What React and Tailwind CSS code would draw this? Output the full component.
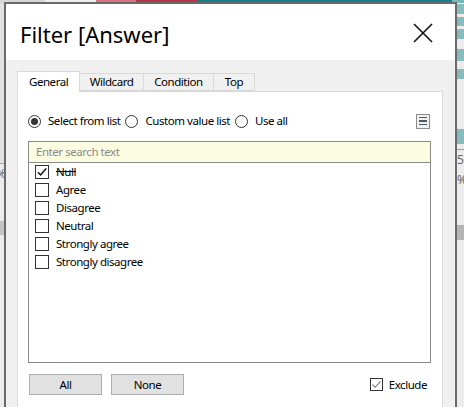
import React from "react";

const font = { fontFamily: '"Segoe UI", "Noto Sans", "Open Sans", sans-serif' };
const sm = "text-[11.5px] tracking-[-0.45px]";

function Radio({ checked, label }) {
  return (
    <div className="flex items-center gap-[7px]">
      <div className="w-[13px] h-[13px] rounded-full border border-[#333] bg-white flex items-center justify-center">
        {checked && <div className="w-[7px] h-[7px] rounded-full bg-[#333]" />}
      </div>
      <span className={`${sm} text-black leading-none`}>{label}</span>
    </div>
  );
}

function Check({ checked }) {
  return (
    <div className="w-[14px] h-[14px] border border-[#333] bg-white flex items-center justify-center">
      {checked && (
        <svg width="12" height="12" viewBox="0 0 12 12">
          <path d="M2 6.2 L4.6 9 L10.2 2.5" fill="none" stroke="#111" strokeWidth="1.5" />
        </svg>
      )}
    </div>
  );
}

const items = ["Null", "Agree", "Disagree", "Neutral", "Strongly agree", "Strongly disagree"];

export default function App() {
  return (
    <div className="relative w-[464px] h-[407px] overflow-hidden bg-[#ececec]" style={font}>
      {/* background canvas behind the modal */}
      <div className="absolute left-0 top-0 w-[464px] h-[3px] flex">
        <div className="w-[45px] bg-[#d6d6d6]" />
        <div className="w-[51px] bg-[#eeeeee]" />
        <div className="w-[40px] bg-[#d9707f]" />
        <div className="w-[61px] bg-[#b5364a]" />
        <div className="flex-1 bg-[#15808a]" />
        <div className="w-[12px] bg-[#7ab9b9]" />
      </div>
      <div className="absolute left-[457px] top-0 w-[7px] h-[407px] flex flex-col bg-[#ececec]">
        <div className="h-[3px] bg-[#7ab9b9]" />
        <div className="h-[10px] mt-[1px] bg-[#86bcbc]" />
        <div className="h-[9px] mt-[3px] bg-[#86bcbc]" />
        <div className="h-[10px] mt-[3px] bg-[#86bcbc]" />
        <div className="h-[12px] mt-[10px] bg-[#86bcbc]" />
        <div className="h-[10px] mt-[8px] bg-[#86bcbc]" />
        <div className="h-[15px] mt-[50px] bg-[#86bcbc]" />
        <div className="h-[1px] mt-[5px] bg-[#999]" />
        <div className="h-[20px] text-[12px] text-[#666] leading-[20px]">50</div>
        <div className="h-[20px] text-[12px] text-[#666] leading-[20px]">%</div>
        <div className="h-[15px] mt-[35px] bg-[#b5b5b5]" />
      </div>
      <div className="absolute left-0 top-[3px] w-[4px] h-[404px] flex flex-col bg-[#ececec]">
        <div className="h-[160px] bg-[#e2e2e2]" />
        <div className="h-[1px] bg-[#aaa]" />
        <div className="h-[20px] text-[12px] text-[#666] leading-[20px] -ml-[4px]">%</div>
        <div className="h-[14px] mt-[37px] bg-[#c4c4c4]" />
      </div>

      {/* modal dialog */}
      <div className="absolute left-[4px] top-[2px] w-[453px] h-[430px] border-2 border-[#6a6a6a] bg-[#f0f0f0] flex flex-col">
        <div className="h-[56px] bg-white flex items-center justify-between pl-[14px] pr-[21px]">
          <span className="text-[22px] text-black leading-none mt-[3px]">Filter [Answer]</span>
          <svg width="22" height="22" viewBox="0 0 22 22" className="mt-[2px]">
            <path d="M2 2 L20 20 M20 2 L2 20" stroke="#111" strokeWidth="1.6" />
          </svg>
        </div>
        <div className="pl-[11px] pr-[12px] pt-[11px] flex flex-col flex-1">
          <div className={`flex items-end h-[20px] ${sm}`}>
            <div className="h-[21px] w-[63px] bg-white border border-b-0 border-[#d9d9d9] flex items-center pl-[11px] relative top-[1px]">General</div>
            <div className="h-[18px] w-[64px] border border-l-0 border-[#d9d9d9] flex items-center justify-center">Wildcard</div>
            <div className="h-[18px] w-[70px] border border-l-0 border-[#d9d9d9] flex items-center justify-center">Condition</div>
            <div className="h-[18px] w-[41px] border border-l-0 border-[#d9d9d9] flex items-center justify-center">Top</div>
          </div>
          <div className="flex-1 bg-white border border-[#d9d9d9] flex flex-col pl-[10px] pr-[11px]">
            <div className="flex items-center justify-between mt-[22px] h-[14px]">
              <div className="flex items-center gap-[5px]">
                <Radio checked label="Select from list" />
                <Radio label="Custom value list" />
                <Radio label="Use all" />
              </div>
              <div className="w-[14px] h-[15px] border border-[#8c8c8c] bg-[#f0f0f0] flex flex-col items-center justify-center gap-[2px] mr-[1px]">
                <div className="w-[8px] h-[1.5px] bg-[#4b5968]" />
                <div className="w-[8px] h-[1.5px] bg-[#4b5968]" />
                <div className="w-[8px] h-[1.5px] bg-[#4b5968]" />
              </div>
            </div>
            <div className={`mt-[13px] h-[22px] border border-[#8a8a8a] bg-[#fcfce1] flex items-center pl-[7px] ${sm} text-[#8a8a8a]`}>
              Enter search text
            </div>
            <div className="h-[200px] border border-t-0 border-[#8a8a8a] flex flex-col pl-[6px]">
              {items.map((it, i) => (
                <div key={it} className="h-[18px] flex items-center gap-[7px]">
                  <Check checked={i === 0} />
                  <span className={`${sm} text-black leading-none ${i === 0 ? "line-through" : ""}`}>{it}</span>
                </div>
              ))}
            </div>
            <div className="mt-[11px] flex items-center justify-between">
              <div className="flex gap-[9px] pl-[1px]">
                <button className={`w-[73px] h-[21px] bg-[#e1e1e1] border border-[#adadad] ${sm} text-black`}>All</button>
                <button className={`w-[73px] h-[21px] bg-[#e1e1e1] border border-[#adadad] ${sm} text-black`}>None</button>
              </div>
              <div className="flex items-center gap-[6px] mr-[4px]">
                <div className="w-[13px] h-[13px] border border-[#333] bg-white flex items-center justify-center">
                  <svg width="11" height="11" viewBox="0 0 11 11">
                    <path d="M1.5 5.5 L4.2 8.3 L9.5 2.3" fill="none" stroke="#777" strokeWidth="1.1" />
                  </svg>
                </div>
                <span className={`${sm} text-black`}>Exclude</span>
              </div>
            </div>
          </div>
        </div>
      </div>
    </div>
  );
}
